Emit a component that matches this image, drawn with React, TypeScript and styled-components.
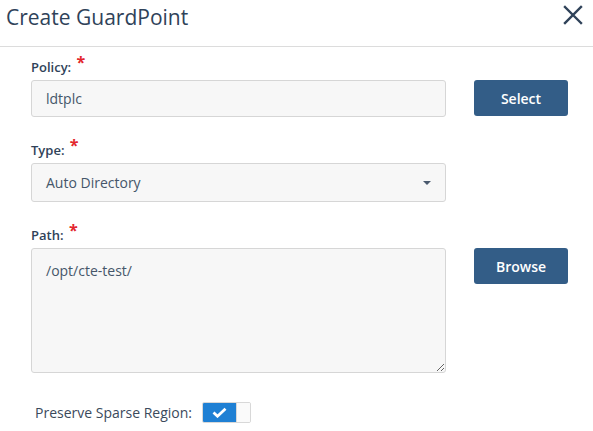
import styled, { createGlobalStyle } from 'styled-components';

const GlobalStyle = createGlobalStyle`
  html, body {
    margin: 0;
    padding: 0;
    background: #ffffff;
    font-family: 'Open Sans', 'Noto Sans', sans-serif;
  }
`;

function App() {
  return (
    <>
      <GlobalStyle />
      <Dialog>
        <Header>
          <Title>Create GuardPoint</Title>
          <Close aria-label='close'>
            <svg width='20' height='20' viewBox='0 0 20 20'>
              <path
                d='M2 2 L18 18 M18 2 L2 18'
                stroke='#2f4259'
                strokeWidth='2.4'
                strokeLinecap='square'
              />
            </svg>
          </Close>
        </Header>

        <Body>
          <Field>
            <Label>
              Policy: <Req>*</Req>
            </Label>
            <Row>
              <Input defaultValue='ldtplc' readOnly />
              <Button>Select</Button>
            </Row>
          </Field>

          <Field>
            <Label>
              Type: <Req>*</Req>
            </Label>
            <Row>
              <SelectBox>
                <span>Auto Directory</span>
                <Caret />
              </SelectBox>
            </Row>
          </Field>

          <Field>
            <Label>
              Path: <Req>*</Req>
            </Label>
            <Row>
              <TextArea defaultValue='/opt/cte-test/' />
              <Button>Browse</Button>
            </Row>
          </Field>

          <ToggleRow>
            <ToggleLabel>Preserve Sparse Region:</ToggleLabel>
            <Toggle>
              <ToggleOn>
                <svg width='15' height='11' viewBox='0 0 15 11'>
                  <path
                    d='M1.5 5.5 L5.5 9.2 L13.5 1.8'
                    stroke='#fff'
                    strokeWidth='2.8'
                    fill='none'
                  />
                </svg>
              </ToggleOn>
              <Knob />
            </Toggle>
          </ToggleRow>
        </Body>
      </Dialog>
    </>
  );
}
export default App;

const Dialog = styled.div`
  width: 593px;
  height: 431px;
  overflow: hidden;
  background: #fff;
`;

const Header = styled.div`
  height: 47px;
  box-sizing: border-box;
  border-bottom: 1px solid #dcdcdc;
  display: flex;
  align-items: flex-start;
  justify-content: space-between;
  padding: 0 10px 0 6px;
`;

const Title = styled.h1`
  margin: 0;
  font-size: 21px;
  font-weight: 400;
  line-height: 34px;
  color: #2f4259;
`;

const Close = styled.div`
  margin-top: 5px;
  width: 20px;
  height: 20px;
`;

const Body = styled.div`
  padding: 10px 0 0 31px;
  display: flex;
  flex-direction: column;
`;

const Field = styled.div`
  display: flex;
  flex-direction: column;
  margin-bottom: 23px;
  &:nth-child(3) {
    margin-bottom: 0;
  }
`;

const Label = styled.div`
  font-size: 13px;
  font-weight: 600;
  color: #2f4259;
  line-height: 18px;
  margin-bottom: 4px;
`;

const Req = styled.span`
  color: #e3262d;
  font-size: 16px;
  font-weight: 700;
  position: relative;
  top: -4px;
  margin-left: 2px;
`;

const Row = styled.div`
  display: flex;
  align-items: flex-start;
  gap: 28px;
`;

const fieldBase = `
  box-sizing: border-box;
  width: 415px;
  background: #f7f7f7;
  border: 1px solid #d6d6d6;
  border-radius: 3px;
  font-family: 'Open Sans', 'Noto Sans', sans-serif;
  font-size: 14px;
  color: #45566a;
  padding: 0 14px;
  outline: none;
`;

const Input = styled.input`
  ${fieldBase}
  height: 37px;
`;

const SelectBox = styled.div`
  ${fieldBase}
  height: 39px;
  display: flex;
  align-items: center;
  justify-content: space-between;
  padding-right: 14px;
`;

const Caret = styled.div`
  width: 0;
  height: 0;
  border-left: 4px solid transparent;
  border-right: 4px solid transparent;
  border-top: 4px solid #4a5a6e;
`;

const TextArea = styled.textarea`
  ${fieldBase}
  height: 125px;
  padding-top: 12px;
  resize: vertical;
  line-height: 20px;
`;

const Button = styled.button`
  width: 94px;
  height: 36px;
  border: none;
  border-radius: 3px;
  background: #335d87;
  color: #fff;
  font-family: 'Open Sans', 'Noto Sans', sans-serif;
  font-size: 14px;
  font-weight: 600;
`;

const ToggleRow = styled.div`
  display: flex;
  align-items: center;
  gap: 10px;
  margin-top: 29px;
  padding-left: 4px;
`;

const ToggleLabel = styled.span`
  font-size: 14px;
  color: #3b4a5c;
`;

const Toggle = styled.div`
  display: flex;
  height: 21px;
  width: 49px;
  border-radius: 2px;
  overflow: hidden;
  border: 1px solid #d8d8d8;
  box-sizing: border-box;
`;

const ToggleOn = styled.div`
  flex: 1;
  background: #1f80d4;
  display: flex;
  align-items: center;
  justify-content: center;
`;

const Knob = styled.div`
  width: 13px;
  background: #fafafa;
  border-left: 1px solid #d8d8d8;
`;
